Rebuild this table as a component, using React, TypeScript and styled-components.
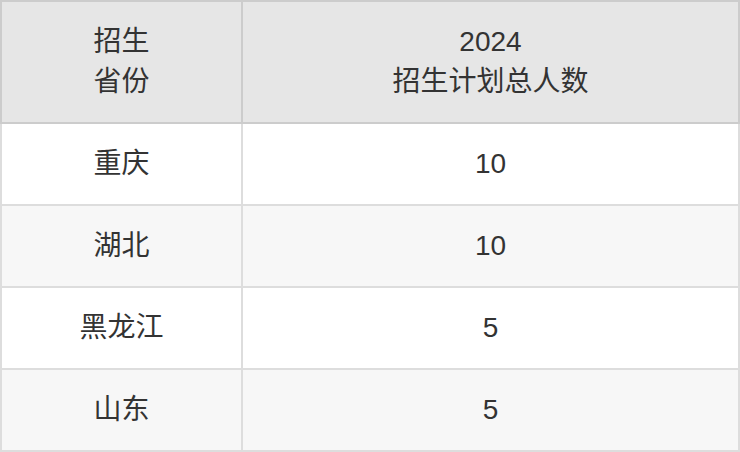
import styled, { createGlobalStyle } from "styled-components";

const GlobalStyle = createGlobalStyle`
  html, body {
    margin: 0;
    padding: 0;
    background: #fff;
  }
  body {
    font-family: "Liberation Sans", Arial, "Noto Sans CJK SC", sans-serif;
    color: #333;
  }
`;

const rows = [
  { province: "重庆", total: 10 },
  { province: "湖北", total: 10 },
  { province: "黑龙江", total: 5 },
  { province: "山东", total: 5 },
];

const Table = styled.div`
  width: 740px;
  display: flex;
  flex-direction: column;
`;

const Row = styled.div<{ $striped?: boolean }>`
  display: grid;
  grid-template-columns: 243px 1fr;
  background: ${(p) => (p.$striped ? "#f7f7f7" : "#fff")};
`;

const HeadRow = styled(Row)`
  background: #e6e6e6;
`;

const Cell = styled.div<{ $first?: boolean; $head?: boolean }>`
  box-sizing: border-box;
  padding: 20px 10px;
  font-size: 28px;
  line-height: 40px;
  text-align: center;
  border-right: 2px solid ${(p) => (p.$head ? "#ccc" : "#ddd")};
  border-bottom: 2px solid ${(p) => (p.$head ? "#ccc" : "#ddd")};
  border-left: ${(p) => (p.$first ? `2px solid ${p.$head ? "#ccc" : "#ddd"}` : "none")};
  border-top: ${(p) => (p.$head ? "2px solid #ccc" : "none")};
`;

export default function App() {
  return (
    <>
      <GlobalStyle />
      <Table>
        <HeadRow>
          <Cell $head $first>
            招生
            <br />
            省份
          </Cell>
          <Cell $head>
            2024
            <br />
            招生计划总人数
          </Cell>
        </HeadRow>
        {rows.map((r, i) => (
          <Row key={r.province} $striped={i % 2 === 1}>
            <Cell $first>{r.province}</Cell>
            <Cell>{r.total}</Cell>
          </Row>
        ))}
      </Table>
    </>
  );
}
